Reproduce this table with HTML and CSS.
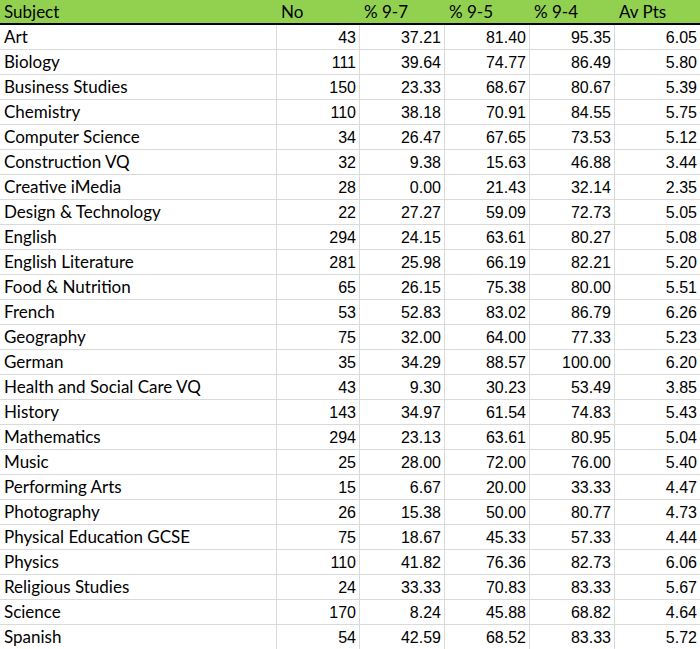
FILE: index.html
```html
<!DOCTYPE html>
<html lang="en">
<head>
<meta charset="utf-8">
<title>Subject results</title>
<link rel="stylesheet" href="styles.css">
</head>
<body>
<div class="sheet">
  <div class="hd">Subject</div><div class="hd">No</div><div class="hd">% 9-7</div><div class="hd">% 9-5</div><div class="hd">% 9-4</div><div class="hd last">Av Pts</div>

  <div class="c t">Art</div><div class="c n">43</div><div class="c n">37.21</div><div class="c n">81.40</div><div class="c n">95.35</div><div class="c n last">6.05</div>
  <div class="c t">Biology</div><div class="c n">111</div><div class="c n">39.64</div><div class="c n">74.77</div><div class="c n">86.49</div><div class="c n last">5.80</div>
  <div class="c t">Business Studies</div><div class="c n">150</div><div class="c n">23.33</div><div class="c n">68.67</div><div class="c n">80.67</div><div class="c n last">5.39</div>
  <div class="c t">Chemistry</div><div class="c n">110</div><div class="c n">38.18</div><div class="c n">70.91</div><div class="c n">84.55</div><div class="c n last">5.75</div>
  <div class="c t">Computer Science</div><div class="c n">34</div><div class="c n">26.47</div><div class="c n">67.65</div><div class="c n">73.53</div><div class="c n last">5.12</div>
  <div class="c t">Construction VQ</div><div class="c n">32</div><div class="c n">9.38</div><div class="c n">15.63</div><div class="c n">46.88</div><div class="c n last">3.44</div>
  <div class="c t">Creative iMedia</div><div class="c n">28</div><div class="c n">0.00</div><div class="c n">21.43</div><div class="c n">32.14</div><div class="c n last">2.35</div>
  <div class="c t">Design &amp; Technology</div><div class="c n">22</div><div class="c n">27.27</div><div class="c n">59.09</div><div class="c n">72.73</div><div class="c n last">5.05</div>
  <div class="c t">English</div><div class="c n">294</div><div class="c n">24.15</div><div class="c n">63.61</div><div class="c n">80.27</div><div class="c n last">5.08</div>
  <div class="c t">English Literature</div><div class="c n">281</div><div class="c n">25.98</div><div class="c n">66.19</div><div class="c n">82.21</div><div class="c n last">5.20</div>
  <div class="c t">Food &amp; Nutrition</div><div class="c n">65</div><div class="c n">26.15</div><div class="c n">75.38</div><div class="c n">80.00</div><div class="c n last">5.51</div>
  <div class="c t">French</div><div class="c n">53</div><div class="c n">52.83</div><div class="c n">83.02</div><div class="c n">86.79</div><div class="c n last">6.26</div>
  <div class="c t">Geography</div><div class="c n">75</div><div class="c n">32.00</div><div class="c n">64.00</div><div class="c n">77.33</div><div class="c n last">5.23</div>
  <div class="c t">German</div><div class="c n">35</div><div class="c n">34.29</div><div class="c n">88.57</div><div class="c n">100.00</div><div class="c n last">6.20</div>
  <div class="c t">Health and Social Care VQ</div><div class="c n">43</div><div class="c n">9.30</div><div class="c n">30.23</div><div class="c n">53.49</div><div class="c n last">3.85</div>
  <div class="c t">History</div><div class="c n">143</div><div class="c n">34.97</div><div class="c n">61.54</div><div class="c n">74.83</div><div class="c n last">5.43</div>
  <div class="c t">Mathematics</div><div class="c n">294</div><div class="c n">23.13</div><div class="c n">63.61</div><div class="c n">80.95</div><div class="c n last">5.04</div>
  <div class="c t">Music</div><div class="c n">25</div><div class="c n">28.00</div><div class="c n">72.00</div><div class="c n">76.00</div><div class="c n last">5.40</div>
  <div class="c t">Performing Arts</div><div class="c n">15</div><div class="c n">6.67</div><div class="c n">20.00</div><div class="c n">33.33</div><div class="c n last">4.47</div>
  <div class="c t">Photography</div><div class="c n">26</div><div class="c n">15.38</div><div class="c n">50.00</div><div class="c n">80.77</div><div class="c n last">4.73</div>
  <div class="c t">Physical Education GCSE</div><div class="c n">75</div><div class="c n">18.67</div><div class="c n">45.33</div><div class="c n">57.33</div><div class="c n last">4.44</div>
  <div class="c t">Physics</div><div class="c n">110</div><div class="c n">41.82</div><div class="c n">76.36</div><div class="c n">82.73</div><div class="c n last">6.06</div>
  <div class="c t">Religious Studies</div><div class="c n">24</div><div class="c n">33.33</div><div class="c n">70.83</div><div class="c n">83.33</div><div class="c n last">5.67</div>
  <div class="c t">Science</div><div class="c n">170</div><div class="c n">8.24</div><div class="c n">45.88</div><div class="c n">68.82</div><div class="c n last">4.64</div>
  <div class="c t">Spanish</div><div class="c n">54</div><div class="c n">42.59</div><div class="c n">68.52</div><div class="c n">83.33</div><div class="c n last">5.72</div>
</div>
</body>
</html>
```

FILE: styles.css
```css
html, body {
  margin: 0;
  padding: 0;
  background: #ffffff;
}

.sheet {
  display: grid;
  grid-template-columns: 277px 83px 85px 85px 85px 85px;
  grid-auto-rows: 25px;
  width: 700px;
  color: #000000;
}

.hd {
  background: #92d050;
  border-bottom: 2px solid #000000;
  font-family: "Lato", "Liberation Sans", sans-serif;
  font-size: 17px;
  line-height: 23px;
  padding: 0 0 0 4px;
  box-sizing: border-box;
  white-space: nowrap;
}

.c {
  border-right: 1px solid #dadada;
  border-bottom: 1px solid #dadada;
  box-sizing: border-box;
  white-space: nowrap;
  overflow: hidden;
}

.c.last {
  border-right: none;
}

.t {
  font-family: "Lato", "Liberation Sans", sans-serif;
  font-size: 17px;
  line-height: 24px;
  padding: 0 0 0 4px;
}

.n {
  font-family: "Liberation Sans", Arial, sans-serif;
  font-size: 16px;
  line-height: 24px;
  padding: 1px 3px 0 0;
  text-align: right;
}
```
